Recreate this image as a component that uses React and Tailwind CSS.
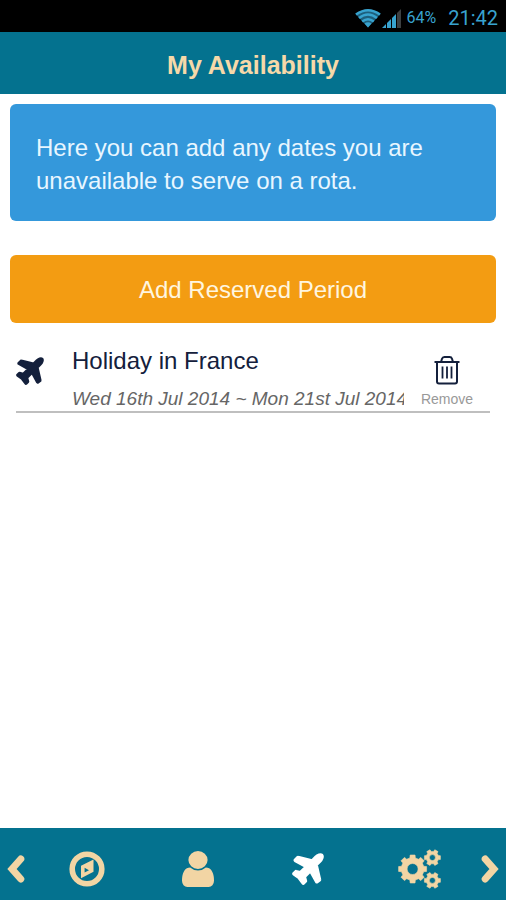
import { useState } from 'react'

const PLANE =
  'M1568 160q44 52 12 148t-108 172l-161 161 160 696q5 19-12 33l-128 96q-7 6-19 6-4 0-7-1-15-3-21-16l-279-508-259 259 53 194q5 17-8 31l-96 96q-9 9-23 9h-2q-15-2-24-13l-189-252-252-189q-11-7-13-23-1-13 9-25l96-97q9-9 23-9 6 0 8 1l194 53 259-259-508-279q-14-8-17-24-2-16 9-27l128-128q14-13 30-8l665 159 160-160q76-76 172-108t148 12z'

const USER =
  'M1536 1399q0 109-62.5 187t-150.5 78h-854q-88 0-150.5-78t-62.5-187q0-85 8.5-160.5t31.5-152 58.5-131 94-89 134.5-34.5q131 128 313 128t313-128q76 0 134.5 34.5t94 89 58.5 131 31.5 152 8.5 160.5zm-256-887q0 159-112.5 271.5t-271.5 112.5-271.5-112.5-112.5-271.5 112.5-271.5 271.5-112.5 271.5 112.5 112.5 271.5z'

const gearPath = (cx, cy, teeth, outer, inner, hole) => {
  const step = (Math.PI * 2) / teeth
  const points = []
  for (let i = 0; i < teeth; i++) {
    const a = i * step
    const corners = [
      [inner, -0.31],
      [outer, -0.22],
      [outer, 0.22],
      [inner, 0.31],
    ]
    corners.forEach(([r, t]) => {
      points.push(`${cx + r * Math.cos(a + t * step)} ${cy + r * Math.sin(a + t * step)}`)
    })
  }
  const ring = `M${cx - hole} ${cy}a${hole} ${hole} 0 1 0 ${hole * 2} 0a${hole} ${hole} 0 1 0 ${-hole * 2} 0z`
  return `M${points.join('L')}z${ring}`
}

const Plane = ({ className }) => (
  <svg
    viewBox="130 68 1528 1528"
    fill="currentColor"
    stroke="currentColor"
    strokeWidth="110"
    strokeLinejoin="round"
    className={className}
    aria-hidden="true"
  >
    <path d={PLANE} />
  </svg>
)

const Person = () => (
  <svg viewBox="256 128 1280 1536" preserveAspectRatio="none" fill="currentColor" className="h-9 w-8" aria-hidden="true">
    <path d={USER} />
  </svg>
)

const Compass = () => (
  <svg viewBox="0 0 36 36" fill="none" stroke="currentColor" className="size-9" aria-hidden="true">
    <circle cx="18" cy="18" r="14.8" strokeWidth="5.600" />
    <path
      d="M24.500 8.600v12.200l-12.500 6.400V14.800zM15.600 16.800v4.800l4.400-2.400z"
      fill="currentColor"
      fillRule="evenodd"
      stroke="none"
    />
  </svg>
)

const Cogs = () => (
  <svg
    viewBox="0 0 44 42"
    fill="currentColor"
    fillRule="evenodd"
    stroke="currentColor"
    strokeWidth="0.6"
    strokeLinejoin="round"
    className="h-[42px] w-11"
    aria-hidden="true"
  >
    <path d={gearPath(15.6, 21, 8, 14.2, 11.4, 5.5)} />
    <path d={gearPath(35.4, 9.6, 6, 8.2, 6.3, 3)} />
    <path d={gearPath(35.4, 32.4, 6, 8.2, 6.3, 3)} />
  </svg>
)

const Chevron = ({ right }) => (
  <svg viewBox="0 0 18 28" className="h-7 w-[18px]" aria-hidden="true">
    <path
      d={right ? 'M4.200 4L13 14L4.200 24' : 'M13.800 4L5 14L13.800 24'}
      fill="none"
      stroke="currentColor"
      strokeWidth="7"
      strokeLinejoin="miter"
      strokeLinecap="round"
    />
  </svg>
)

const Trash = () => (
  <svg viewBox="0 0 26 30" fill="none" stroke="currentColor" strokeWidth="2" className="h-[30px] w-[26px]" aria-hidden="true">
    <path d="M0.500 7h25" />
    <path d="M7 7l1-3.200q.6-1.800 2.400-1.800h5.200q1.800 0 2.400 1.800L19 7" />
    <path d="M3 7v19.500q0 2 2 2h16q2 0 2-2V7" />
    <path d="M8.500 11.500v12M13 11.500v12M17.500 11.500v12" strokeWidth="1.800" />
  </svg>
)

const Wifi = () => (
  <svg viewBox="0 0 28 20" className="h-5 w-7" fill="none" stroke="#38a3cf" aria-hidden="true">
    <path d="M1.500 6Q14-2.500 26.500 6L14 19.500z" fill="#1d5f7c" stroke="none" />
    <path d="M2 6.500Q14-2 26 6.500" strokeWidth="2.600" />
    <path d="M5 10Q14 3 23 10" strokeWidth="2.600" />
    <path d="M8.200 13.500Q14 9 19.800 13.500" strokeWidth="2.600" />
    <path d="M10.500 15.500Q14 13 17.500 15.500L14 19.500z" fill="#38a3cf" stroke="none" />
  </svg>
)

const Signal = () => (
  <svg viewBox="0 0 20 20" className="size-5" aria-hidden="true">
    <path d="M0 20L4 16V20zM5 15L9 11V20H5zM10 10L14 6V20H10z" fill="#38a3cf" />
    <path d="M15 5L19 1V20H15z" fill="#3d4042" />
  </svg>
)

const tabs = [
  { id: 'explore', label: 'Explore', icon: <Compass /> },
  { id: 'profile', label: 'Profile', icon: <Person /> },
  { id: 'availability', label: 'Availability', icon: <Plane className="size-8" /> },
  { id: 'settings', label: 'Settings', icon: <Cogs /> },
]

function StatusBar() {
  return (
    <div className="flex h-8 items-center justify-end bg-black pt-1 pr-2 font-[Roboto,sans-serif] text-[#38a3cf]">
      <Wifi />
      <Signal />
      <span className="ml-1 text-base">64%</span>
      <span className="ml-3 text-xl">21:42</span>
    </div>
  )
}

function Period({ period, onRemove }) {
  return (
    <li className="flex border-b-2 border-[#bfbfbf] text-[#14203c]">
      <div className="w-14 shrink-0 pt-[10px]">
        <Plane className="size-7" />
      </div>
      <div className="min-w-0 flex-1">
        <h2 className="text-2xl leading-7">{period.title}</h2>
        <p className="mt-3 overflow-hidden text-[19px] leading-6 whitespace-nowrap text-[#666] italic">
          {period.from} ~ {period.to}
        </p>
      </div>
      <button
        type="button"
        onClick={() => onRemove(period.id)}
        className="flex w-[86px] shrink-0 flex-col items-center gap-1 pt-2"
      >
        <Trash />
        <span className="text-sm text-[#999]">Remove</span>
      </button>
    </li>
  )
}

function App() {
  const [active, setActive] = useState('availability')
  const [periods, setPeriods] = useState([
    { id: 1, title: 'Holiday in France', from: 'Wed 16th Jul 2014', to: 'Mon 21st Jul 2014' },
  ])

  const removePeriod = (id) => setPeriods(periods.filter((_) => _.id !== id))

  return (
    <div className="flex min-h-screen flex-col bg-white font-['Liberation_Sans',Arial,sans-serif]">
      <StatusBar />
      <header className="flex h-[62px] items-center justify-center bg-[#04728f]">
        <h1 className="pt-[6px] text-[25px] font-bold text-[#f6d9a9]">My Availability</h1>
      </header>
      <main className="flex flex-1 flex-col px-[10px] pt-[10px]">
        <p className="rounded-md bg-[#3498db] px-[26px] pt-[27px] pb-6 text-2xl leading-[33px] text-[#e8f6ff]">
          Here you can add any dates you are unavailable to serve on a rota.
        </p>
        <button type="button" className="mt-[34px] h-[68px] rounded-md bg-[#f39c12] pt-[2px] text-2xl text-[#fff6e0]">
          Add Reserved Period
        </button>
        <ul className="mx-[6px] mt-6">
          {periods.map((period) => (
            <Period key={period.id} period={period} onRemove={removePeriod} />
          ))}
        </ul>
      </main>
      <nav className="flex h-[72px] items-center bg-[#04728f] pt-[10px] text-[#f2d5a4]">
        <button type="button" aria-label="Previous" className="flex w-8 justify-center">
          <Chevron />
        </button>
        {tabs.map((tab) => (
          <button
            key={tab.id}
            type="button"
            aria-label={tab.label}
            onClick={() => setActive(tab.id)}
            className={`flex flex-1 justify-center ${active === tab.id ? 'text-white' : ''}`}
          >
            {tab.icon}
          </button>
        ))}
        <button type="button" aria-label="Next" className="flex w-8 justify-center">
          <Chevron right />
        </button>
      </nav>
    </div>
  )
}

export default App
